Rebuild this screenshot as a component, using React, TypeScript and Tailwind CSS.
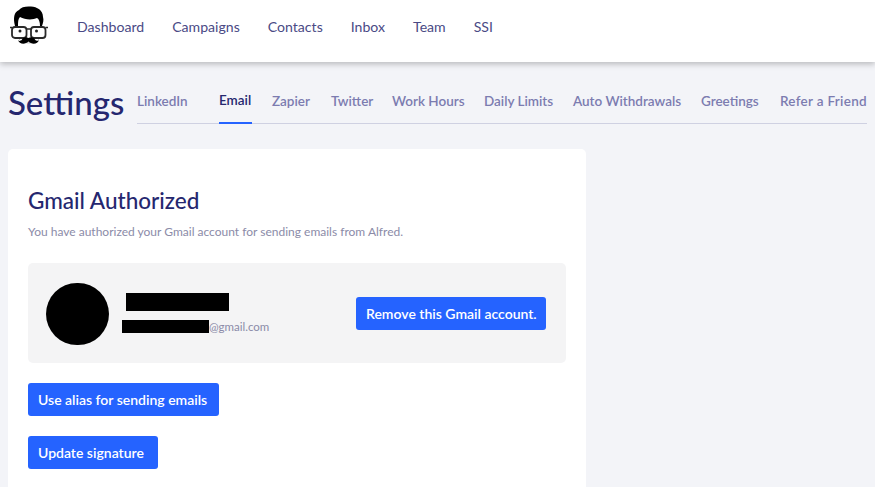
const NAV = ["Dashboard", "Campaigns", "Contacts", "Inbox", "Team", "SSI"];

const TABS = [
  { label: "LinkedIn", className: "mr-[11px] w-[51px]" },
  { label: "Email", active: true, className: "w-[33px]" },
  { label: "Zapier", className: "w-[39px]" },
  { label: "Twitter", className: "w-[41px]" },
  { label: "Work Hours", className: "w-[72px]" },
  { label: "Daily Limits", className: "w-[69px]" },
  { label: "Auto Withdrawals", className: "w-[108px]" },
  { label: "Greetings", className: "w-[59px]" },
  { label: "Refer a Friend", className: "tracking-[0.3px]" },
];

// little guy with glasses and a moustache
function Logo() {
  return (
    <svg width="38" height="40" viewBox="0 0 38 40" className="shrink-0">
      <path d="M5 20 C3 12 4 6 9 4 C11 1 16 0 21 0.5 C27 1 33 4 33 11 C34 14 33 17 32 20 L30 20 C30 16 29 13 27 12 C23 14 15 14 10 11 C8 13 8 16 8 20 Z" fill="#000" />
      <path d="M7 30 C9 35 14 37 19 37 C24 37 29 35 31 30" fill="none" stroke="#888" strokeWidth="0.5" />
      <rect x="2" y="21" width="14.5" height="11" rx="3" fill="#fff" stroke="#2a2a2a" strokeWidth="1.8" />
      <rect x="21" y="21" width="14.5" height="11" rx="3" fill="#fff" stroke="#2a2a2a" strokeWidth="1.8" />
      <path d="M16.5 23 H21 M0 21.5 H2 M35.5 21.5 H38" stroke="#2a2a2a" strokeWidth="1.6" />
      <circle cx="10" cy="25" r="1.5" fill="#222" />
      <circle cx="26.5" cy="25" r="1.5" fill="#222" />
      <path d="M18.5 32 C16 30.5 13 31.5 12 33.5 C10.5 35.5 9 35 8 34 C9 38 15 39 18.5 35.5 C22 39 28 38 29 34 C28 35 26.5 35.5 25 33.5 C24 31.5 21 30.5 18.5 32 Z" fill="#000" />
    </svg>
  );
}

function BlueButton({ children, className = "" }: { children: React.ReactNode; className?: string }) {
  return (
    <button className={`h-[33px] rounded-[3px] bg-[#2563ff] pl-[10px] text-left text-[14px] font-semibold text-white ${className}`}>
      {children}
    </button>
  );
}

export default function App() {
  return (
    <div className="flex h-screen flex-col overflow-hidden bg-[#f3f4f8] font-['Lato','Open_Sans',sans-serif]">
      <header className="flex h-[62px] shrink-0 items-center bg-white pl-[10px] shadow-[0_2px_6px_rgba(0,0,0,0.25)]">
        <div className="-mt-[10px]">
          <Logo />
        </div>
        <nav className="ml-[29px] -mt-[8px] flex gap-[28px] text-[14.1px] text-[#4a4a85]">
          {NAV.map((item) => (
            <span key={item}>{item}</span>
          ))}
        </nav>
      </header>

      <div className="flex items-start pl-2 pt-[19px]">
        <h1 className="w-[129px] text-[33px] leading-[42px] font-medium text-[#25276f]">Settings</h1>
        <div className="flex h-[43px] w-[730px] gap-5 border-b border-[#cfd1e2] text-[13.5px] font-semibold whitespace-nowrap">
          {TABS.map((tab) => (
            <span
              key={tab.label}
              className={`flex items-center pb-[2px] ${tab.className ?? ""} ${
                tab.active ? "-mb-px border-b-2 border-[#2563ff] text-[#25276f]" : "text-[#7c7cb0]"
              }`}
            >
              {tab.label}
            </span>
          ))}
        </div>
      </div>

      <main className="mt-[25px] ml-2 w-[578px] flex-1 rounded-t-[5px] bg-white px-5 pt-[37px]">
        <h2 className="text-[22.5px] leading-[30px] font-medium text-[#25276f]">Gmail Authorized</h2>
        <p className="mt-[8px] text-[12px] leading-[16px] text-[#8b8ba8]">
          You have authorized your Gmail account for sending emails from Alfred.
        </p>

        <section className="mt-[23px] flex h-[100px] items-center justify-between rounded-[5px] bg-[#f4f4f5] pr-5 pl-[18px]">
          <div className="flex items-center">
            <div className="mt-[2px] h-[62px] w-[63px] rounded-full bg-black" />
            <div className="ml-[13px] flex flex-col">
              <div className="ml-1 h-[18px] w-[103px] bg-black" />
              <div className="mt-[9px] flex items-center">
                <div className="h-[13px] w-[87px] bg-black" />
                <span className="text-[11.5px] leading-[13px] text-[#8b8ba8]">@gmail.com</span>
              </div>
            </div>
          </div>
          <BlueButton className="w-[190px]">Remove this Gmail account.</BlueButton>
        </section>

        <div className="mt-5 flex flex-col items-start gap-5">
          <BlueButton className="w-[191px]">Use alias for sending emails</BlueButton>
          <BlueButton className="w-[130px]">Update signature</BlueButton>
        </div>
      </main>
    </div>
  );
}
